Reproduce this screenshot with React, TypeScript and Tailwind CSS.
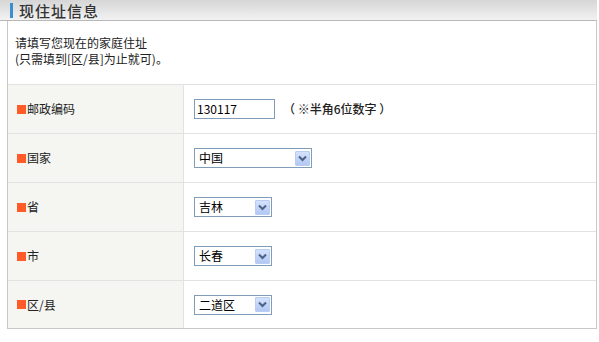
import React from "react";

const font = { fontFamily: '"Noto Sans CJK SC", "Noto Sans", sans-serif' };

function Arrow() {
  return (
    <div className="w-[15px] h-[15px] border border-[#b9cdf2] bg-gradient-to-b from-[#d4e2fc] to-[#b2c8f3] flex items-center justify-center rounded-[1px]">
      <svg width="9" height="7" viewBox="0 0 9 7">
        <path d="M1 1.5 L4.5 5 L8 1.5" fill="none" stroke="#4d6185" strokeWidth="2" />
      </svg>
    </div>
  );
}

function Select({ value, w }: { value: string; w: string }) {
  return (
    <div className={`${w} h-[20px] border border-[#7f9db9] bg-white flex items-center justify-between pl-[4px] pr-[1px]`}>
      <span className="text-[12px] leading-[16px] text-black">{value}</span>
      <Arrow />
    </div>
  );
}

function Row({ label, children, last }: { label: string; children: React.ReactNode; last?: boolean }) {
  return (
    <div className={`flex h-[49px] border-t border-[#e2e2e2] ${last ? "border-b border-b-[#c8c8c8]" : ""}`}>
      <div className="w-[176px] bg-[#f5f5f1] border-r border-[#e2e2e2] flex items-center pl-[9px]">
        <span className="w-[9px] h-[9px] bg-[#ff5a28] mr-[1px]" />
        <span className="text-[12px] text-[#222]">{label}</span>
      </div>
      <div className="flex-1 flex items-center pl-[10px]">{children}</div>
    </div>
  );
}

export default function App() {
  return (
    <div className="w-[599px] h-[342px] bg-white" style={font}>
      <div className="w-[597px] h-[21px] bg-gradient-to-b from-[#d6d6d6] to-[#f2f2f2] border-b border-[#b8b8b8] flex items-center pl-[10px]">
        <span className="w-[3px] h-[15px] bg-[#3a8fd0] mr-[6px]" />
        <span className="text-[15px] leading-[17px] text-[#333] font-medium tracking-[1px]">现住址信息</span>
      </div>
      <div className="ml-[7px] w-[590px] border-l border-r border-[#c8c8c8]">
        <div className="h-[63px] pl-[7px] pt-[14px] text-[12px] leading-[16px] text-[#222]">
          <div>请填写您现在的家庭住址</div>
          <div>(只需填到[区/县]为止就可)。</div>
        </div>
        <Row label="邮政编码">
          <div className="w-[81px] h-[20px] border border-[#7f9db9] bg-white flex items-center pl-[2px] text-[12px] text-black">
            130117
          </div>
          <span className="ml-[8px] text-[12px] text-[#222] font-medium">（ ※半角6位数字 ）</span>
        </Row>
        <Row label="国家">
          <Select value="中国" w="w-[118px]" />
        </Row>
        <Row label="省">
          <Select value="吉林" w="w-[78px]" />
        </Row>
        <Row label="市">
          <Select value="长春" w="w-[78px]" />
        </Row>
        <Row label="区/县" last>
          <Select value="二道区" w="w-[78px]" />
        </Row>
      </div>
    </div>
  );
}
